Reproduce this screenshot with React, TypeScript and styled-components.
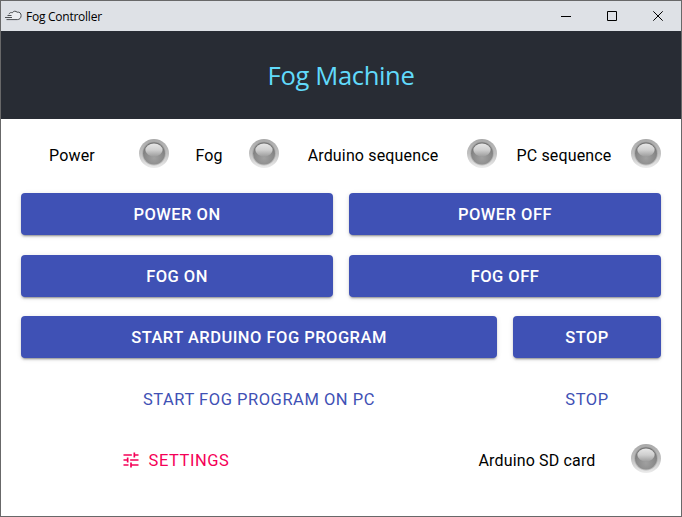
import React from "react";
import styled, { createGlobalStyle } from "styled-components";

const GlobalStyle = createGlobalStyle`
  * { box-sizing: border-box; }
  body { margin: 0; background: #fff; overflow: hidden; }
`;

const Window = styled.div`
  width: 682px;
  height: 517px;
  display: flex;
  flex-direction: column;
  border: 1px solid #686869;
  background: #fff;
  color: #000;
  font-family: Roboto, "Liberation Sans", sans-serif;
  font-size: 16px;
`;

const TitleBar = styled.div`
  height: 30px;
  flex: none;
  display: flex;
  align-items: center;
  padding-left: 4px;
  background: #dee1e6;
`;

const WindowTitle = styled.span`
  flex: 1;
  margin-left: 4px;
  font: 12px "Open Sans", "Noto Sans", sans-serif;
  letter-spacing: -0.25px;
`;

const WindowControl = styled.div`
  width: 46px;
  height: 30px;
  display: grid;
  place-items: center;
`;

const Header = styled.header`
  height: 88px;
  flex: none;
  display: flex;
  align-items: center;
  justify-content: center;
  background: #282c34;
  color: #61dafb;
  font: 25.6px "Open Sans", "Noto Sans", sans-serif;
  letter-spacing: -0.36px;
  padding-top: 1px;
`;

const Panel = styled.main`
  display: flex;
  flex-direction: column;
  padding: 20px 20px 0;
`;

const Row = styled.div<{ $columns: string; $height?: number }>`
  display: grid;
  grid-template-columns: ${(p) => p.$columns};
  column-gap: 16px;
  align-items: center;
  height: ${(p) => p.$height ?? 61.5}px;
`;

const StatusRow = styled(Row)`
  margin-bottom: 14.5px;
`;

const Label = styled.span`
  text-align: center;
  white-space: nowrap;
  line-height: 20px;
  padding-top: 4px;
  letter-spacing: 0.15px;
`;

const Button = styled.button<{ $variant?: "text" | "accent" }>`
  height: 42px;
  width: 100%;
  display: flex;
  align-items: center;
  justify-content: center;
  gap: 8px;
  padding: ${(p) => (p.$variant === "accent" ? "2px 4px 0 0" : "0.5px 0 0")};
  border: 0;
  border-radius: 4px;
  font-family: inherit;
  font-size: 16.5px;
  letter-spacing: ${(p) => (p.$variant ? 0.54 : 0.48)}px;
  white-space: nowrap;
  font-weight: ${(p) => (p.$variant ? 400 : 500)};
  color: ${(p) => (p.$variant === "accent" ? "#f50057" : p.$variant === "text" ? "#3f51b5" : "#fff")};
  background: ${(p) => (p.$variant ? "transparent" : "#3f51b5")};
  box-shadow: ${(p) =>
    p.$variant
      ? "none"
      : "0 3px 1px -2px rgba(0,0,0,.2), 0 2px 2px 0 rgba(0,0,0,.14), 0 1px 5px 0 rgba(0,0,0,.12)"};
`;

const LedIcon = styled.svg`
  display: block;
  width: 30px;
  height: 30px;
`;

function Led() {
  return (
    <LedIcon viewBox="0 0 30 30">
      <defs>
        <linearGradient id="rim" x1="0" y1="0" x2="0" y2="1">
          <stop offset="0" stopColor="#a8a8a8" />
          <stop offset="0.5" stopColor="#c0c0c0" />
          <stop offset="1" stopColor="#ececec" />
        </linearGradient>
        <linearGradient id="bezel" x1="0" y1="0" x2="0" y2="1">
          <stop offset="0" stopColor="#989898" />
          <stop offset="1" stopColor="#c0c0c0" />
        </linearGradient>
        <radialGradient id="lens" cx="0.5" cy="0.7" r="0.72">
          <stop offset="0" stopColor="#a0a0a0" />
          <stop offset="0.6" stopColor="#8a8a8a" />
          <stop offset="1" stopColor="#6c6c6c" />
        </radialGradient>
        <linearGradient id="shine" x1="0" y1="0" x2="0" y2="1">
          <stop offset="0" stopColor="#e6e6e6" />
          <stop offset="0.5" stopColor="#cfcfcf" />
          <stop offset="1" stopColor="#9e9e9e" />
        </linearGradient>
      </defs>
      <ellipse cx="15" cy="14.5" rx="15" ry="14.5" fill="url(#rim)" />
      <circle cx="15" cy="14.6" r="11.8" fill="url(#bezel)" />
      <circle cx="15" cy="14.5" r="10.9" fill="url(#lens)" />
      <ellipse cx="15" cy="11" rx="8.6" ry="6.4" fill="url(#shine)" />
    </LedIcon>
  );
}

function CloudIcon() {
  return (
    <svg width="17" height="12" viewBox="0 0 17 12" fill="none" stroke="#4c4f52" strokeWidth="1">
      <path
        d="M4.2 5C4.2 3 5.8 2.1 7.3 2.8C8.2 .9 11 .8 12.1 2.2C14.5 1.7 16.2 3.3 16.1 5.5C16.1 8 14.6 9.6 12.3 9.6H5.5L4.2 7.5Z"
        fill="#eceef1"
        stroke="none"
      />
      <path d="M4 4.2C4.6 2.7 5.8 2.2 7.3 2.8C8.2 .9 11 .8 12.1 2.2C14.5 1.7 16.2 3.3 16.1 5.5C16.1 8 14.6 9.6 12.3 9.6H1.5M2.5 5.5H6.5M0 7.5H7" />
    </svg>
  );
}

function TuneIcon() {
  return (
    <svg width="20" height="20" viewBox="0 0 24 24" fill="currentColor">
      <path d="M3 17v2h6v-2H3zM3 5v2h10V5H3zm10 16v-2h8v-2h-8v-2h-2v6h2zM7 9v2H3v2h4v2h2V9H7zm14 4v-2H11v2h10zm-6-4h2V7h4V5h-4V3h-2v6z" />
    </svg>
  );
}

const controls = ["M0 5.5H10", "M.5 .5H9.5V9.5H.5Z", "M.3 .3L9.7 9.7M9.7 .3L.3 9.7"];

export default function App() {
  return (
    <>
      <GlobalStyle />
      <Window>
        <TitleBar>
          <CloudIcon />
          <WindowTitle>Fog Controller</WindowTitle>
          {controls.map((d) => (
            <WindowControl key={d}>
              <svg width="10" height="10" viewBox="0 0 10 10" fill="none" stroke="#000">
                <path d={d} />
              </svg>
            </WindowControl>
          ))}
        </TitleBar>
        <Header>Fog Machine</Header>
        <Panel>
          <StatusRow $columns="102px 30px 48px 30px 156px 30px 102px 30px" $height={30}>
            <Label>Power</Label>
            <Led />
            <Label>Fog</Label>
            <Led />
            <Label>Arduino sequence</Label>
            <Led />
            <Label>PC sequence</Label>
            <Led />
          </StatusRow>
          <Row $columns="312px 312px">
            <Button>POWER ON</Button>
            <Button>POWER OFF</Button>
          </Row>
          <Row $columns="312px 312px">
            <Button>FOG ON</Button>
            <Button>FOG OFF</Button>
          </Row>
          <Row $columns="476px 148px">
            <Button>START ARDUINO FOG PROGRAM</Button>
            <Button>STOP</Button>
          </Row>
          <Row $columns="476px 148px">
            <Button $variant="text">START FOG PROGRAM ON PC</Button>
            <Button $variant="text">STOP</Button>
          </Row>
          <Row $columns="312px 94px 156px 30px" $height={59}>
            <Button $variant="accent">
              <TuneIcon />
              SETTINGS
            </Button>
            <span />
            <Label>Arduino SD card</Label>
            <Led />
          </Row>
        </Panel>
      </Window>
    </>
  );
}
